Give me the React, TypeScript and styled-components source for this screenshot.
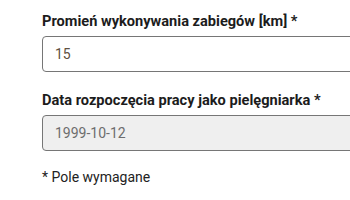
import React from "react";
import styled, { createGlobalStyle } from "styled-components";

const Global = createGlobalStyle`
  html, body { margin: 0; padding: 0; background: #fff; overflow: hidden; }
  body { font-family: Roboto, "Liberation Sans", Arial, sans-serif; }
`;

const Form = styled.div`
  display: flex;
  flex-direction: column;
  padding: 11px 0 0 42px;
  width: 340px;
`;

const Field = styled.div`
  display: flex;
  flex-direction: column;
  gap: 5px;
  margin-bottom: 18px;
`;

const Label = styled.label`
  font-size: 14.6px;
  line-height: 20px;
  font-weight: 700;
  color: #1c1c1c;
`;

const Input = styled.input<{ $disabled?: boolean }>`
  box-sizing: border-box;
  height: 36px;
  width: 100%;
  padding: 0 12px;
  border: 1px solid #767676;
  border-radius: 4px;
  background: ${(p) => (p.$disabled ? "#efefef" : "#fff")};
  font-family: Roboto, "Liberation Sans", Arial, sans-serif;
  font-size: 14px;
  color: ${(p) => (p.$disabled ? "#6d6d6d" : "#5e5040")};
  outline: none;
  margin: 0;
`;

const Note = styled.div`
  font-size: 14px;
  line-height: 20px;
  color: #222;
  margin-top: -2px;
`;

export default function App() {
  return (
    <>
      <Global />
      <Form>
        <Field>
          <Label>Promień wykonywania zabiegów [km] *</Label>
          <Input defaultValue="15" readOnly />
        </Field>
        <Field>
          <Label>Data rozpoczęcia pracy jako pielęgniarka *</Label>
          <Input $disabled defaultValue="1999-10-12" disabled />
        </Field>
        <Note>* Pole wymagane</Note>
      </Form>
    </>
  );
}
